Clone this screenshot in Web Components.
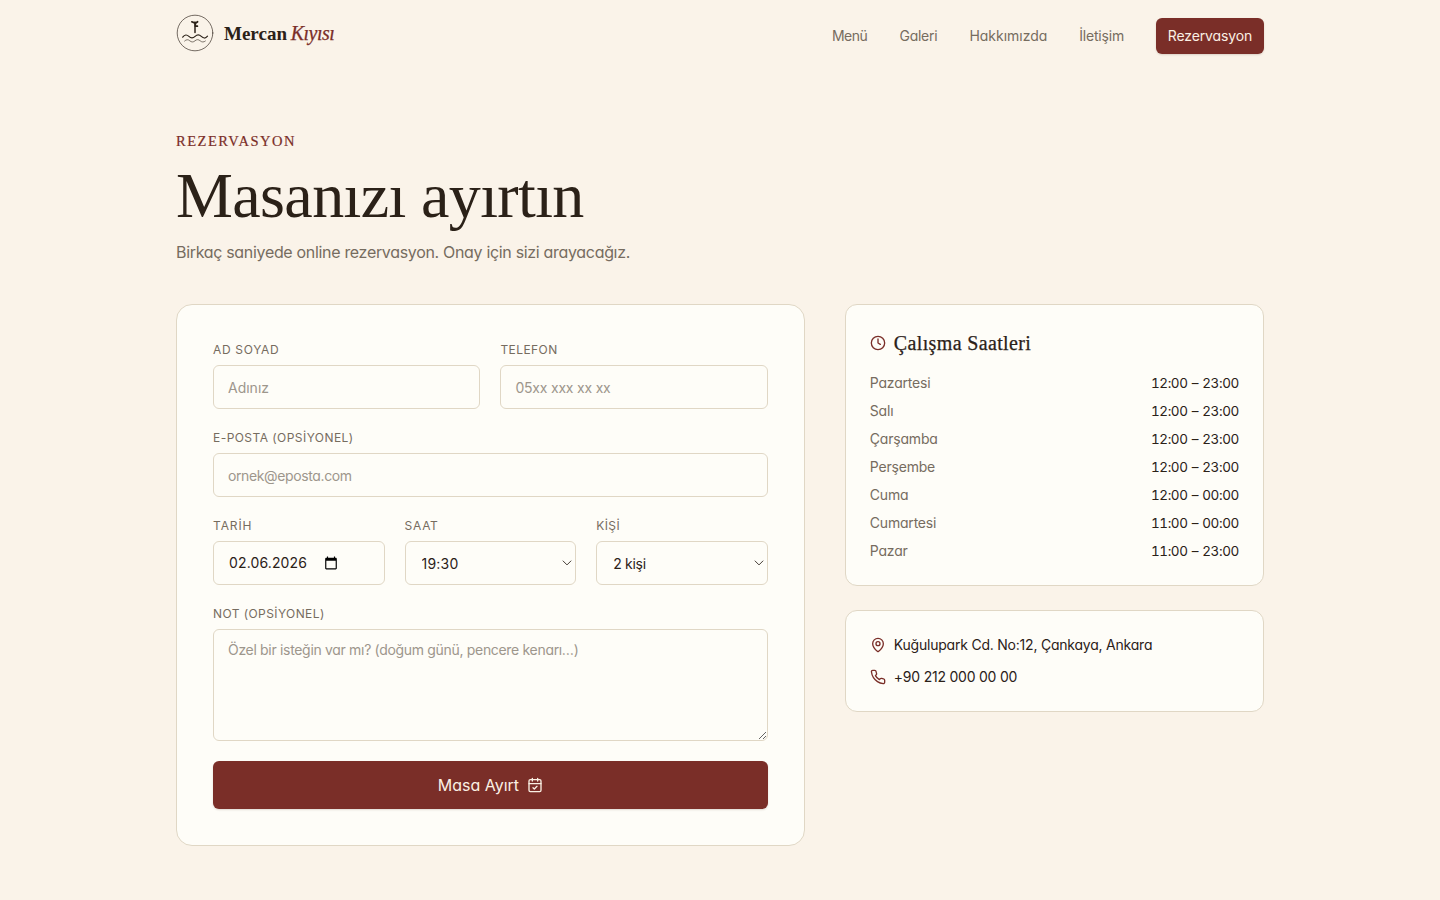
<!DOCTYPE html>
<html lang="tr">
<head>
<meta charset="utf-8">
<title>Mercan Kıyısı – Rezervasyon</title>
<style>
    :root {
        --bg: #faf3e9;
        --card: #fefdf8;
        --line: #e0d7c5;
        --ink: #2b2118;
        --muted: #766c5f;
        --wine: #7a2e28;
        --cream: #faf0e4;
        --serif: 'Liberation Serif', serif;
    }
    body {
        margin: 0;
        height: 900px;
        overflow: hidden;
        background: var(--bg);
        color: var(--ink);
        font-family: 'Inter', 'Open Sans', sans-serif;
        font-size: 14px;
        line-height: 20px;
        font-feature-settings: 'cv11';
    }
</style>
</head>
<body>
<reservation-page></reservation-page>

<script>
const ICONS = {
    clock: '<circle cx="12" cy="12" r="10"/><path d="M12 6v6l3.5 2"/>',
    pin: '<path d="M20 10c0 4.993-5.539 10.193-7.399 11.799a1 1 0 0 1-1.202 0C9.539 20.193 4 14.993 4 10a8 8 0 0 1 16 0"/><circle cx="12" cy="10" r="3"/>',
    phone: '<path d="M22 16.92v3a2 2 0 0 1-2.18 2 19.79 19.79 0 0 1-8.63-3.07 19.5 19.5 0 0 1-6-6 19.79 19.79 0 0 1-3.07-8.67A2 2 0 0 1 4.11 2h3a2 2 0 0 1 2 1.72c.127.96.361 1.903.7 2.81a2 2 0 0 1-.45 2.11L8.09 9.91a16 16 0 0 0 6 6l1.27-1.27a2 2 0 0 1 2.11-.45c.907.339 1.85.573 2.81.7A2 2 0 0 1 22 16.92"/>',
    calendar: '<path d="M8 2v4M16 2v4M3 10h18M9 16l2 2 4-4"/><rect x="3" y="4" width="18" height="18" rx="2"/>'
};

class LineIcon extends HTMLElement {
    connectedCallback() {
        this.attachShadow({ mode: 'open' }).innerHTML = `
        <style>
            :host { display: block; width: 16px; height: 16px; flex: none; }
            svg { display: block; }
        </style>
        <svg width="16" height="16" viewBox="0 0 24 24" fill="none" stroke="currentColor"
            stroke-width="2" stroke-linecap="round" stroke-linejoin="round">${ICONS[this.getAttribute('name')]}</svg>`;
    }
}

class SiteHeader extends HTMLElement {
    connectedCallback() {
        this.attachShadow({ mode: 'open' }).innerHTML = `
        <style>
            :host { display: flex; justify-content: space-between; height: 72px; }
            .brand { display: flex; align-items: center; gap: 10px; height: 66px; }
            .name { font-family: var(--serif); font-size: 19px; font-weight: 700; line-height: 24px; white-space: nowrap; }
            em { font-weight: 400; font-size: 20px; color: var(--wine); letter-spacing: -0.5px; margin-left: -1px; -webkit-text-stroke: .25px var(--wine); }
            nav { display: flex; align-items: center; gap: 32px; color: var(--muted); }
            nav span { white-space: nowrap; }
            .cta {
                height: 36px;
                width: 108px;
                line-height: 36px;
                text-align: center;
                border-radius: 6px;
                background: var(--wine);
                color: var(--cream);
                box-shadow: 0 1px 2px rgba(60, 30, 20, .16);
            }
        </style>
        <div class="brand">
            <svg width="38" height="38" viewBox="0 0 38 38" fill="none" stroke="#2b2118" stroke-linecap="round">
                <circle cx="19" cy="19" r="17.8" stroke-width="1" opacity=".65"/>
                <path d="M19 8v10.5" stroke-width="1.5"/>
                <path d="M15.8 7.8l2.6 1.1h1.8M19.5 9.2l2.1-1.5M19.5 12.2h1.9M19.3 9v3" stroke-width="1.7"/>
                <path d="M6.7 23.2c2.1-2.8 4.1-2.8 6.2-.8s4.1 2 6.2 0 4.1-2 6.2 0 4.1 2.4 6.2-.2" stroke-width="1.2"/>
                <path d="M8.6 27c1.7-1.7 3.5-1.7 5.2-.2s3.5 1.5 5.2 0 3.5-1.5 5.2 0 3.5 1.6 5.2.2" stroke-width="1" opacity=".6"/>
            </svg>
            <span class="name">Mercan <em>Kıyısı</em></span>
        </div>
        <nav>
            <span style="letter-spacing:-.45px">Menü</span>
            <span style="letter-spacing:-.25px">Galeri</span>
            <span style="letter-spacing:-.02px">Hakkımızda</span>
            <span style="letter-spacing:-.2px">İletişim</span>
            <span class="cta" style="letter-spacing:-.12px">Rezervasyon</span>
        </nav>`;
    }
}

class PageIntro extends HTMLElement {
    connectedCallback() {
        this.attachShadow({ mode: 'open' }).innerHTML = `
        <style>
            :host { display: block; height: 232px; box-sizing: border-box; padding-top: 59px; white-space: nowrap; }
            .eyebrow { font-family: var(--serif); font-size: 14.5px; letter-spacing: 1.52px; color: var(--wine); line-height: 20px; -webkit-text-stroke: .2px var(--wine); }
            h1 { margin: 12px 0 0; font-family: var(--serif); font-weight: 400; font-size: 64px; line-height: 66px; letter-spacing: -0.62px; }
            p { margin: 11px 0 0; font-size: 16px; line-height: 24px; letter-spacing: -0.32px; color: var(--muted); }
        </style>
        <div class="eyebrow">REZERVASYON</div>
        <h1>Masanızı ayırtın</h1>
        <p>Birkaç saniyede online rezervasyon. Onay için sizi arayacağız.</p>`;
    }
}

class SurfaceCard extends HTMLElement {
    connectedCallback() {
        this.attachShadow({ mode: 'open' }).innerHTML = `
        <style>
            :host {
                display: block;
                box-sizing: border-box;
                padding: var(--pad, 24px);
                border: 1px solid var(--line);
                border-radius: var(--radius, 12px);
                background: var(--card);
            }
        </style>
        <slot></slot>`;
    }
}

class FormField extends HTMLElement {
    connectedCallback() {
        const ph = this.getAttribute('placeholder') || '';
        const value = this.getAttribute('value') || '';
        const controls = {
            text: `<input type="text" placeholder="${ph}">`,
            area: `<textarea placeholder="${ph}"></textarea>`,
            select: `<select><option>${value}</option></select>`,
            date: `<div class="control date"><span>${value}</span>
                <svg viewBox="0 0 24 24"><path d="M20 3h-1V1h-2v2H7V1H5v2H4c-1.1 0-2 .9-2 2v16c0 1.1.9 2 2 2h16c1.1 0 2-.9 2-2V5c0-1.1-.9-2-2-2zm0 18H4V8h16v13z" fill="#000"/></svg></div>`
        };
        this.attachShadow({ mode: 'open' }).innerHTML = `
        <style>
            :host { display: block; min-width: 0; }
            label { display: block; height: 24px; line-height: 18px; font-size: 12px; color: var(--muted); letter-spacing: var(--label-ls, .42px); white-space: nowrap; }
            input, textarea, select, .control {
                display: block;
                box-sizing: border-box;
                width: 100%;
                height: 44px;
                margin: 0;
                padding: 1px 14px 0;
                border: 1px solid var(--line);
                border-radius: 6px;
                background: transparent;
                color: var(--ink);
                font: inherit;
                font-feature-settings: inherit;
                letter-spacing: var(--text-ls, -.2px);
                outline: none;
            }
            textarea { height: 112px; padding: 10px 14px; resize: vertical; }
            ::placeholder { color: #9d968c; opacity: 1; }
            select {
                appearance: none;
                padding: 2px 16px 0;
                background: url("data:image/svg+xml,%3Csvg xmlns='http://www.w3.org/2000/svg' width='10' height='6' fill='none' stroke='%23453d35' stroke-width='1'%3E%3Cpath d='M.8.7l4.2 4.2L9.2.7'/%3E%3C/svg%3E") no-repeat right 3px top 18px;
            }
            .date { display: flex; align-items: center; gap: 17px; padding: 0 15px; }
            .date svg { width: 14px; height: 14px; }
        </style>
        <label>${this.getAttribute('label')}</label>
        ${controls[this.getAttribute('kind') || 'text']}`;
    }
}

class ReservationForm extends HTMLElement {
    connectedCallback() {
        this.attachShadow({ mode: 'open' }).innerHTML = `
        <style>
            :host { display: block; }
            form { display: grid; gap: 20px; }
            .two { display: grid; grid-template-columns: 1fr 1fr; gap: 20px; }
            .three { display: grid; grid-template-columns: repeat(3, 1fr); gap: 20px; }
            button {
                display: flex;
                align-items: center;
                justify-content: center;
                gap: 8px;
                height: 48px;
                padding: 0;
                border: 0;
                border-radius: 6px;
                background: var(--wine);
                color: var(--cream);
                font: inherit;
                font-size: 16px;
                font-feature-settings: inherit;
                letter-spacing: 0;
                box-shadow: 0 1px 2px rgba(60, 30, 20, .16);
            }
        </style>
        <form>
            <div class="two">
                <form-field label="AD SOYAD" placeholder="Adınız" style="--label-ls:.68px;--text-ls:0"></form-field>
                <form-field label="TELEFON" placeholder="05xx xxx xx xx"></form-field>
            </div>
            <form-field label="E-POSTA (OPSİYONEL)" placeholder="ornek@eposta.com" style="--label-ls:.45px;--text-ls:-.38px"></form-field>
            <div class="three">
                <form-field kind="date" label="TARİH" value="02.06.2026" style="--label-ls:.9px;--text-ls:.13px"></form-field>
                <form-field kind="select" label="SAAT" value="19:30" style="--label-ls:.7px;--text-ls:.2px"></form-field>
                <form-field kind="select" label="KİŞİ" value="2 kişi" style="--text-ls:-.3px"></form-field>
            </div>
            <form-field kind="area" label="NOT (OPSİYONEL)" placeholder="Özel bir isteğin var mı? (doğum günü, pencere kenarı…)" style="--text-ls:-.32px"></form-field>
            <button type="button"><span>Masa Ayırt</span><line-icon name="calendar"></line-icon></button>
        </form>`;
    }
}

class OpeningHours extends HTMLElement {
    connectedCallback() {
        const days = [
            ['Pazartesi', '12:00 – 23:00'],
            ['Salı', '12:00 – 23:00'],
            ['Çarşamba', '12:00 – 23:00'],
            ['Perşembe', '12:00 – 23:00'],
            ['Cuma', '12:00 – 00:00'],
            ['Cumartesi', '11:00 – 00:00'],
            ['Pazar', '11:00 – 23:00']
        ];
        this.attachShadow({ mode: 'open' }).innerHTML = `
        <style>
            :host { display: block; }
            h2 { display: flex; align-items: center; gap: 8px; height: 28px; margin: 0 0 16px; font: 400 20px/28px var(--serif); letter-spacing: .36px; -webkit-text-stroke: .25px var(--ink); }
            line-icon { color: var(--wine); }
            ul { display: grid; gap: 8px; margin: 0; padding: 0; list-style: none; }
            li { display: flex; justify-content: space-between; }
            .day { color: var(--muted); letter-spacing: -.2px; }
            .time { font-variant-numeric: tabular-nums; font-size: 13.5px; width: 88px; letter-spacing: -.42px; word-spacing: 1px; white-space: nowrap; }
        </style>
        <h2><line-icon name="clock"></line-icon><span>Çalışma Saatleri</span></h2>
        <ul>${days.map(d => `<li><span class="day">${d[0]}</span><span class="time">${d[1]}</span></li>`).join('')}</ul>`;
    }
}

class ContactInfo extends HTMLElement {
    connectedCallback() {
        this.attachShadow({ mode: 'open' }).innerHTML = `
        <style>
            :host { display: grid; gap: 12px; }
            div { display: flex; align-items: center; gap: 8px; letter-spacing: -.22px; }
            line-icon { color: var(--wine); }
        </style>
        <div><line-icon name="pin"></line-icon><span>Kuğulupark Cd. No:12, Çankaya, Ankara</span></div>
        <div><line-icon name="phone"></line-icon><span>+90 212 000 00 00</span></div>`;
    }
}

class ReservationPage extends HTMLElement {
    connectedCallback() {
        this.attachShadow({ mode: 'open' }).innerHTML = `
        <style>
            :host { display: block; width: 1088px; margin: 0 auto; }
            main { display: grid; grid-template-columns: 1.5fr 1fr; gap: 40px; align-items: start; }
            aside { display: grid; gap: 24px; }
            .form { --pad: 36px; --radius: 16px; }
        </style>
        <site-header></site-header>
        <page-intro></page-intro>
        <main>
            <surface-card class="form"><reservation-form></reservation-form></surface-card>
            <aside>
                <surface-card><opening-hours></opening-hours></surface-card>
                <surface-card><contact-info></contact-info></surface-card>
            </aside>
        </main>`;
    }
}

customElements.define('line-icon', LineIcon);
customElements.define('site-header', SiteHeader);
customElements.define('page-intro', PageIntro);
customElements.define('surface-card', SurfaceCard);
customElements.define('form-field', FormField);
customElements.define('reservation-form', ReservationForm);
customElements.define('opening-hours', OpeningHours);
customElements.define('contact-info', ContactInfo);
customElements.define('reservation-page', ReservationPage);
</script>
</body>
</html>
